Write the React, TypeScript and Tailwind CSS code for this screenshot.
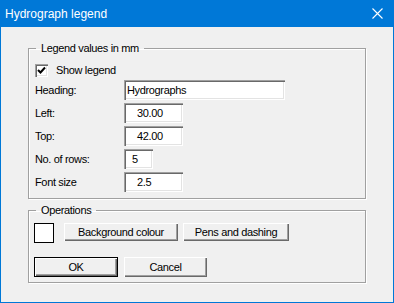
const sunken =
  "bg-white shadow-[inset_1px_1px_0_#a0a0a0,inset_2px_2px_0_#696969,inset_-1px_-1px_0_#ffffff,inset_-2px_-2px_0_#e3e3e3]";
const raised =
  "bg-[#f0f0f0] shadow-[inset_1px_1px_0_#ffffff,inset_-1px_-1px_0_#696969,inset_-2px_-2px_0_#a0a0a0]";
const etched =
  "border border-[#a0a0a0] shadow-[inset_1px_1px_0_#ffffff,1px_1px_0_#ffffff]";

const fields = [
  { label: "Heading:", value: "Hydrographs", w: "w-[161px]", pl: "pl-[3px]" },
  { label: "Left:", value: "30.00", w: "w-[59px]", pl: "pl-[13px]" },
  { label: "Top:", value: "42.00", w: "w-[59px]", pl: "pl-[13px]" },
  { label: "No. of rows:", value: "5", w: "w-[29px]", pl: "pl-[8px]" },
  { label: "Font size", value: "2.5", w: "w-[59px]", pl: "pl-[13px]" },
];

function Button({ label, w, h, isDefault }: { label: string; w: string; h: string; isDefault?: boolean }) {
  return (
    <div
      className={`${w} ${h} flex items-center justify-center ${
        isDefault
          ? "border border-black bg-[#f0f0f0] shadow-[inset_1px_1px_0_#ffffff,inset_-1px_-1px_0_#696969,inset_-2px_-2px_0_#a0a0a0]"
          : raised
      }`}
    >
      {label}
    </div>
  );
}

export default function App() {
  return (
    <div
      className="flex h-[303px] w-[394px] flex-col border-x border-b border-[#0078d7] bg-[#f0f0f0] text-[11px] tracking-[-0.35px] text-black"
      style={{ fontFamily: '"Liberation Sans", Arial, sans-serif' }}
    >
      {/* title bar */}
      <div className="-mx-px flex h-[27px] shrink-0 items-center justify-between bg-[#0078d7] pl-[5px] pr-[11px] text-[12px] tracking-normal text-white">
        <span>Hydrograph legend</span>
        <svg width="11" height="11" viewBox="0 0 11 11" className="mb-[1px]">
          <path d="M0.5 0.5 L10.5 10.5 M10.5 0.5 L0.5 10.5" stroke="white" strokeWidth="1.1" />
        </svg>
      </div>

      <div className="flex flex-col px-[27px]">
        <fieldset className={`mt-[14px] h-[158px] ${etched}`}>
          <legend className="ml-[7px] px-[5px] leading-[14px]">Legend values in mm</legend>
          <div className="flex flex-col pl-[6px]">
            <div className="mt-[9px] flex h-[13px] items-center gap-[8px]">
              <div className={`flex h-[13px] w-[13px] items-center justify-center ${sunken}`}>
                <svg width="9" height="9" viewBox="0 0 9 9">
                  <path d="M1 4 L3.5 6.5 L8 1.5" stroke="black" strokeWidth="2" fill="none" />
                </svg>
              </div>
              <span>Show legend</span>
            </div>
            <div className="mt-[3px] flex flex-col gap-[3px]">
              {fields.map((f) => (
                <div key={f.label} className="flex h-[20px] items-center">
                  <span className="w-[89px]">{f.label}</span>
                  <div className={`flex h-[20px] items-center ${f.w} ${f.pl} ${sunken}`}>{f.value}</div>
                </div>
              ))}
            </div>
          </div>
        </fieldset>

        <fieldset className={`mt-[4px] h-[80px] ${etched}`}>
          <legend className="ml-[7px] px-[5px] leading-[14px]">Operations</legend>
          <div className="flex flex-col pl-[5px]">
            <div className="mt-[6px] flex items-start">
              <div className="h-[20px] w-[20px] border border-black bg-white" />
              <div className="ml-[10px] flex gap-[5px]">
                <Button label="Background colour" w="w-[114px]" h="h-[18px]" />
                <Button label="Pens and dashing" w="w-[106px]" h="h-[18px]" />
              </div>
            </div>
            <div className="mt-[14px] flex gap-[6px]">
              <Button label="OK" w="w-[84px]" h="h-[20px]" isDefault />
              <Button label="Cancel" w="w-[83px]" h="h-[20px]" />
            </div>
          </div>
        </fieldset>
      </div>
    </div>
  );
}
